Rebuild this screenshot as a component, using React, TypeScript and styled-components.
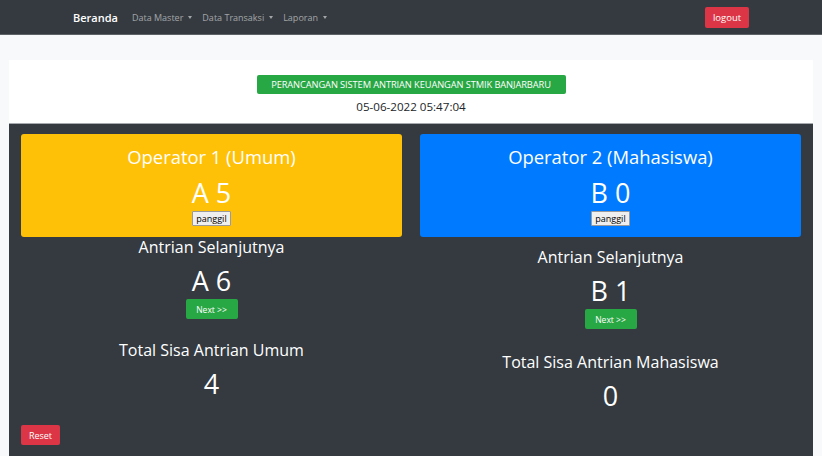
import React from "react";
import styled, { createGlobalStyle } from "styled-components";

const GlobalStyle = createGlobalStyle`
  html, body { margin: 0; padding: 0; }
  body {
    background: #f8f9fa;
    font-family: "Open Sans", "Noto Sans", "Liberation Sans", sans-serif;
    color: #212529;
    overflow: hidden;
  }
`;

const Navbar = styled.nav`
  height: 34px;
  background: #343a40;
  border-bottom: 1px solid #5e6368;
  display: flex;
  align-items: center;
  padding: 0 73px;
`;

const Brand = styled.span`
  color: #fff;
  font-size: 11px;
  font-weight: 600;
  margin-right: 14px;
`;

const NavItem = styled.span`
  color: rgba(255, 255, 255, 0.55);
  font-size: 9px;
  margin-right: 10px;
  display: inline-flex;
  align-items: center;
  &::after {
    content: "";
    display: inline-block;
    margin-left: 5px;
    border-top: 3px solid rgba(255, 255, 255, 0.55);
    border-left: 2.5px solid transparent;
    border-right: 2.5px solid transparent;
  }
`;

const Spacer = styled.div`
  flex: 1;
`;

const Btn = styled.button<{ $variant: "danger" | "success" }>`
  font-family: inherit;
  border: none;
  border-radius: 2px;
  color: #fff;
  background: ${(p) => (p.$variant === "danger" ? "#dc3545" : "#28a745")};
  padding: 0;
  display: inline-flex;
  align-items: center;
  justify-content: center;
`;

const LogoutBtn = styled(Btn)`
  width: 44px;
  height: 21px;
  font-size: 9.5px;
`;

const Main = styled.main`
  padding: 25px 9px 0;
`;

const Header = styled.section`
  background: #fff;
  padding: 15px 0 8px;
  display: flex;
  flex-direction: column;
  align-items: center;
`;

const Badge = styled.div`
  background: #28a745;
  color: #fff;
  font-size: 9.3px;
  height: 19px;
  width: 309px;
  border-radius: 2px;
  display: flex;
  align-items: center;
  justify-content: center;
  white-space: nowrap;
  letter-spacing: -0.1px;
`;

const DateLine = styled.div`
  margin-top: 4px;
  font-size: 11.6px;
  line-height: 17px;
`;

const Dark = styled.section`
  background: #343a40;
  border-top: 1px solid #a7abaf;
  padding: 10px 12px 11px;
`;

const Grid = styled.div`
  display: grid;
  grid-template-columns: 1fr 1fr;
  gap: 18px;
`;

const Column = styled.div<{ $offset: number }>`
  display: flex;
  flex-direction: column;
  align-items: center;
  color: #fff;
  & > h3:first-of-type {
    margin-top: ${(p) => p.$offset}px;
  }
`;

const Card = styled.div<{ $bg: string }>`
  align-self: stretch;
  height: 103px;
  box-sizing: border-box;
  background: ${(p) => p.$bg};
  border-radius: 3px;
  padding-top: 12px;
  display: flex;
  flex-direction: column;
  align-items: center;
  color: #fff;
`;

const CardTitle = styled.div`
  font-size: 18.4px;
  line-height: 22px;
`;

const BigNum = styled.div<{ $mt: number }>`
  font-size: 27px;
  line-height: 30px;
  margin-top: ${(p) => p.$mt}px;
`;

const CallBtn = styled.button`
  margin-top: 3px;
  height: 15px;
  padding: 0 3px;
  font-family: inherit;
  font-size: 9px;
  color: #000;
  background: #efefef;
  border: 1px solid #9a9a9a;
  border-radius: 1px;
  display: inline-flex;
  align-items: center;
`;

const SubTitle = styled.h3<{ $mt?: number }>`
  margin: ${(p) => p.$mt ?? 0}px 0 0;
  font-size: 16px;
  line-height: 20px;
  font-weight: 400;
`;

const NextBtn = styled(Btn)`
  margin-top: 3px;
  width: 52px;
  height: 20px;
  font-size: 8.5px;
`;

const ResetBtn = styled(Btn)`
  margin-top: 14px;
  width: 39px;
  height: 20px;
  font-size: 9px;
`;

type Op = {
  title: string;
  bg: string;
  current: string;
  next: string;
  totalLabel: string;
  total: string;
  offset: number;
};

const ops: Op[] = [
  { title: "Operator 1 (Umum)", bg: "#ffc107", current: "A 5", next: "A 6", totalLabel: "Total Sisa Antrian Umum", total: "4", offset: 0 },
  { title: "Operator 2 (Mahasiswa)", bg: "#007bff", current: "B 0", next: "B 1", totalLabel: "Total Sisa Antrian Mahasiswa", total: "0", offset: 10 },
];

export default function App() {
  return (
    <>
      <GlobalStyle />
      <Navbar>
        <Brand>Beranda</Brand>
        <NavItem>Data Master</NavItem>
        <NavItem>Data Transaksi</NavItem>
        <NavItem>Laporan</NavItem>
        <Spacer />
        <LogoutBtn $variant="danger">logout</LogoutBtn>
      </Navbar>
      <Main>
        <Header>
          <Badge>PERANCANGAN SISTEM ANTRIAN KEUANGAN STMIK BANJARBARU</Badge>
          <DateLine>05-06-2022 05:47:04</DateLine>
        </Header>
        <Dark>
          <Grid>
            {ops.map((o) => (
              <Column key={o.title} $offset={o.offset}>
                <Card $bg={o.bg}>
                  <CardTitle>{o.title}</CardTitle>
                  <BigNum $mt={10}>{o.current}</BigNum>
                  <CallBtn>panggil</CallBtn>
                </Card>
                <SubTitle>Antrian Selanjutnya</SubTitle>
                <BigNum $mt={9}>{o.next}</BigNum>
                <NextBtn $variant="success">Next &gt;&gt;</NextBtn>
                <SubTitle $mt={21 + o.offset / 5}>{o.totalLabel}</SubTitle>
                <BigNum $mt={9}>{o.total}</BigNum>
              </Column>
            ))}
          </Grid>
          <ResetBtn $variant="danger">Reset</ResetBtn>
        </Dark>
      </Main>
    </>
  );
}
